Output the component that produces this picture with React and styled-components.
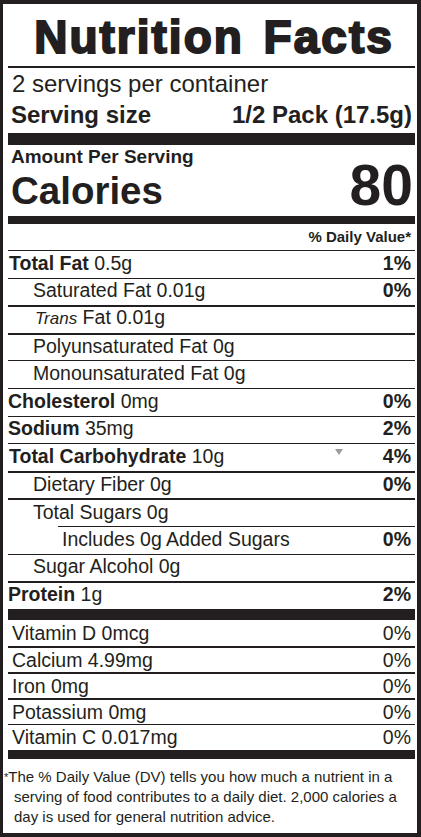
import React from 'react';
import styled, { createGlobalStyle } from 'styled-components';

const INK = '#231f20';

const GlobalStyle = createGlobalStyle`
  html, body {
    margin: 0;
    padding: 0;
    background: #ffffff;
  }
  body {
    font-family: "Liberation Sans", Arial, Helvetica, sans-serif;
    color: ${INK};
  }
`;

const Label = styled.section`
  box-sizing: border-box;
  width: 421px;
  height: 837px;
  border: solid ${INK};
  border-width: 4px 4px 4px 3px;
  padding: 0 2px 0 5px;
  display: flex;
  flex-direction: column;
  background: #ffffff;
  overflow: hidden;
`;

const Title = styled.h1`
  box-sizing: border-box;
  margin: 0;
  height: 64px;
  padding: 4px 0 0 5px;
  border-bottom: 2px solid ${INK};
  font-size: 46px;
  line-height: 58px;
  font-weight: 700;
  letter-spacing: 2px;
  word-spacing: 5px;
  text-align: center;
  white-space: nowrap;
  -webkit-text-stroke: 2px ${INK};
`;

const Servings = styled.div`
  height: 32px;
  padding: 0 3px 0 4px;
  font-size: 24px;
  line-height: 32px;
  white-space: nowrap;
`;

const ServingSize = styled.div`
  display: flex;
  justify-content: space-between;
  height: 30px;
  padding: 0 3px 0 3px;
  font-size: 24px;
  line-height: 30px;
  font-weight: 700;
  white-space: nowrap;
`;

const Bar = styled.div`
  height: ${(p) => p.$h}px;
  margin-top: ${(p) => p.$mt || 0}px;
  background: ${INK};
  flex: none;
`;

const CaloriesBlock = styled.div`
  display: flex;
  justify-content: space-between;
  height: 71px;
  box-sizing: border-box;
  padding: 0 2px 2px 3px;
`;

const CaloriesLeft = styled.div`
  display: flex;
  flex-direction: column;
`;

const AmountLine = styled.div`
  font-size: 19px;
  line-height: 23px;
  font-weight: 700;
  white-space: nowrap;
`;

const CaloriesLine = styled.div`
  font-size: 38.5px;
  line-height: 46px;
  font-weight: 700;
  white-space: nowrap;
`;

const CaloriesValue = styled.div`
  align-self: flex-end;
  font-size: 57px;
  line-height: 58px;
  font-weight: 700;
`;

const DVHeader = styled.div`
  height: 26px;
  padding: 0 4px;
  font-size: 15px;
  line-height: 26px;
  font-weight: 700;
  text-align: right;
  white-space: nowrap;
`;

const Row = styled.div`
  box-sizing: border-box;
  position: relative;
  display: flex;
  align-items: center;
  justify-content: space-between;
  border-top: ${(p) => p.$rule}px solid ${INK};
  margin-left: ${(p) => p.$inset || 0}px;
  padding-right: 4px;
  padding-left: ${(p) => p.$indent}px;
  font-size: 19.5px;
  line-height: 22px;
  white-space: nowrap;
`;

const NutrientRow = styled(Row)`
  height: 27.6px;
  padding-bottom: 3px;
`;

const VitaminRow = styled(Row)`
  height: 26px;
`;

const Name = styled.span``;

const Strong = styled.b`
  font-weight: 700;
`;

const Trans = styled.i`
  font-style: italic;
  font-size: 17px;
`;

const Pct = styled.span`
  font-weight: ${(p) => (p.$bold ? 700 : 400)};
`;

const Marker = styled.span`
  position: absolute;
  left: 327px;
  top: 5px;
  width: 0;
  height: 0;
  border-left: 4px solid transparent;
  border-right: 4px solid transparent;
  border-top: 6px solid #9b9b9b;
`;

const Footnote = styled.p`
  flex: 1;
  margin: 0;
  padding: 8px 0 0 6px;
  font-size: 15px;
  line-height: 19.5px;
  text-indent: -10px;
  white-space: nowrap;
`;

const Star = styled.span`
  font-size: 11px;
  vertical-align: 1px;
`;

const nutrients = [
  { key: 'fat', bold: 'Total Fat', amount: ' 0.5g', pct: '1%', rule: 1, indent: 1 },
  { key: 'sat', label: 'Saturated Fat 0.01g', pct: '0%', rule: 1, indent: 25 },
  { key: 'trans', trans: true, label: ' Fat 0.01g', rule: 2, indent: 27 },
  { key: 'poly', label: 'Polyunsaturated Fat 0g', rule: 2, indent: 25 },
  { key: 'mono', label: 'Monounsaturated Fat 0g', rule: 1, indent: 25 },
  { key: 'chol', bold: 'Cholesterol', amount: ' 0mg', pct: '0%', rule: 1, indent: 0 },
  { key: 'sod', bold: 'Sodium', amount: ' 35mg', pct: '2%', rule: 1, indent: 0 },
  { key: 'carb', bold: 'Total Carbohydrate', amount: ' 10g', pct: '4%', rule: 1, indent: 1, marker: true },
  { key: 'fib', label: 'Dietary Fiber 0g', pct: '0%', rule: 2, indent: 25 },
  { key: 'sug', label: 'Total Sugars 0g', rule: 2, indent: 25 },
  { key: 'add', label: 'Includes 0g Added Sugars', pct: '0%', rule: 1, indent: 4, inset: 50 },
  { key: 'alc', label: 'Sugar Alcohol 0g', rule: 1, indent: 25 },
  { key: 'pro', bold: 'Protein', amount: ' 1g', pct: '2%', rule: 2, indent: 0 },
];

const vitamins = [
  { key: 'd', label: 'Vitamin D 0mcg', rule: 0 },
  { key: 'ca', label: 'Calcium 4.99mg', rule: 2 },
  { key: 'fe', label: 'Iron 0mg', rule: 2 },
  { key: 'k', label: 'Potassium 0mg', rule: 2 },
  { key: 'c', label: 'Vitamin C 0.017mg', rule: 1 },
];

export default function App() {
  return (
    <>
      <GlobalStyle />
      <Label>
        <Title>Nutrition Facts</Title>
        <Servings>2 servings per container</Servings>
        <ServingSize>
          <span>Serving size</span>
          <span>1/2 Pack (17.5g)</span>
        </ServingSize>
        <Bar $h={12} $mt={3} />
        <CaloriesBlock>
          <CaloriesLeft>
            <AmountLine>Amount Per Serving</AmountLine>
            <CaloriesLine>Calories</CaloriesLine>
          </CaloriesLeft>
          <CaloriesValue>80</CaloriesValue>
        </CaloriesBlock>
        <Bar $h={8} />
        <DVHeader>% Daily Value*</DVHeader>
        {nutrients.map((n) => (
          <NutrientRow key={n.key} $rule={n.rule} $indent={n.indent} $inset={n.inset}>
            <Name>
              {n.bold && <Strong>{n.bold}</Strong>}
              {n.amount}
              {n.trans && <Trans>Trans</Trans>}
              {n.label}
            </Name>
            {n.pct && <Pct $bold>{n.pct}</Pct>}
            {n.marker && <Marker />}
          </NutrientRow>
        ))}
        <Bar $h={11} />
        {vitamins.map((v) => (
          <VitaminRow key={v.key} $rule={v.rule} $indent={4}>
            <Name>{v.label}</Name>
            <Pct>0%</Pct>
          </VitaminRow>
        ))}
        <Bar $h={9} />
        <Footnote>
          <Star>*</Star>The % Daily Value (DV) tells you how much a nutrient in a
          <br />
          serving of food contributes to a daily diet. 2,000 calories a
          <br />
          day is used for general nutrition advice.
        </Footnote>
      </Label>
    </>
  );
}
